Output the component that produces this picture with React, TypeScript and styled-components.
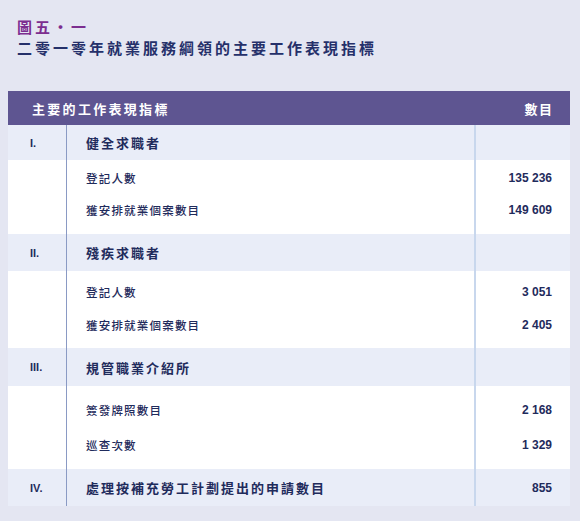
import React from "react";
import styled, { createGlobalStyle } from "styled-components";

const Global = createGlobalStyle`
  html, body { margin: 0; padding: 0; background: #e4e6f2; }
  body { font-family: "Noto Sans CJK TC", "Noto Sans", sans-serif; }
`;

const Page = styled.div`
  width: 580px;
  height: 521px;
  box-sizing: border-box;
  padding: 17px 10px 0 8px;
  background: #e4e6f2;
`;

const Titles = styled.div`
  padding-left: 9px;
  display: flex;
  flex-direction: column;
  gap: 0px;
  margin-bottom: 32px;
`;

const FigNo = styled.div`
  font-size: 15px;
  font-weight: 700;
  letter-spacing: 3px;
  color: #7c2e90;
  line-height: 20px;
`;

const Heading = styled.div`
  font-size: 15px;
  font-weight: 700;
  letter-spacing: 3px;
  color: #25306a;
  line-height: 22px;
`;

const Table = styled.div`
  display: flex;
  flex-direction: column;
  width: 562px;
`;

const HeaderRow = styled.div`
  height: 34px;
  background: #5e5591;
  color: #ffffff;
  display: flex;
  align-items: center;
  justify-content: space-between;
  padding: 0 18px 0 24px;
  font-size: 13px;
  font-weight: 700;
  letter-spacing: 2.3px;
`;

const HeaderNum = styled.span`
  letter-spacing: 1.5px;
  margin-right: -1.5px;
`;

const Grid = styled.div<{ $h: number; $tint?: boolean }>`
  display: grid;
  grid-template-columns: 59px 1fr 96px;
  height: ${(p) => p.$h}px;
  background: ${(p) => (p.$tint ? "#e9edf8" : "#ffffff")};
`;

const NumCell = styled.div`
  border-right: 1px solid #8a9ac4;
  display: flex;
  align-items: center;
  padding-left: 22px;
  font-family: "Liberation Sans", Arial, sans-serif;
  font-size: 11px;
  font-weight: 700;
  color: #1f2b5c;
`;

const SecTitle = styled.div`
  display: flex;
  align-items: center;
  padding-left: 19px;
  font-size: 13px;
  font-weight: 700;
  letter-spacing: 2px;
  color: #1f2b5c;
`;

const ValueCell = styled.div<{ $pt?: number; $pb?: number }>`
  border-left: 2px solid #c8d7ed;
  display: flex;
  flex-direction: column;
  align-items: flex-end;
  justify-content: center;
  padding: ${(p) => p.$pt ?? 0}px 18px ${(p) => p.$pb ?? 0}px 0;
  font-family: "Liberation Sans", Arial, sans-serif;
  font-size: 12px;
  font-weight: 700;
  color: #1f2b5c;
`;

const ItemCol = styled.div<{ $pt: number; $pb: number }>`
  display: flex;
  flex-direction: column;
  padding: ${(p) => p.$pt}px 0 ${(p) => p.$pb}px 19px;
`;

const ItemLabel = styled.div<{ $rh: number }>`
  height: ${(p) => p.$rh}px;
  display: flex;
  align-items: center;
  font-size: 11.5px;
  font-weight: 500;
  letter-spacing: 1.2px;
  color: #1f2b5c;
`;

const ItemValue = styled.div<{ $rh: number }>`
  height: ${(p) => p.$rh}px;
  display: flex;
  align-items: center;
`;

type Section = {
  no: string;
  title: string;
  h: number;
  value?: string;
  items: { label: string; value: string }[];
  bh: number;
  rh: number;
  pt: number;
  pb: number;
};

const sections: Section[] = [
  {
    no: "I.",
    title: "健全求職者",
    h: 35,
    items: [
      { label: "登記人數", value: "135 236" },
      { label: "獲安排就業個案數目", value: "149 609" },
    ],
    bh: 74,
    rh: 32,
    pt: 2,
    pb: 8,
  },
  {
    no: "II.",
    title: "殘疾求職者",
    h: 37,
    items: [
      { label: "登記人數", value: "3 051" },
      { label: "獲安排就業個案數目", value: "2 405" },
    ],
    bh: 77,
    rh: 33,
    pt: 4,
    pb: 7,
  },
  {
    no: "III.",
    title: "規管職業介紹所",
    h: 38,
    items: [
      { label: "簽發牌照數目", value: "2 168" },
      { label: "巡查次數", value: "1 329" },
    ],
    bh: 83,
    rh: 35,
    pt: 6,
    pb: 7,
  },
  {
    no: "IV.",
    title: "處理按補充勞工計劃提出的申請數目",
    h: 37,
    value: "855",
    items: [],
    bh: 0,
    rh: 0,
    pt: 0,
    pb: 0,
  },
];

export default function App() {
  return (
    <Page>
      <Global />
      <Titles>
        <FigNo>圖五・一</FigNo>
        <Heading>二零一零年就業服務綱領的主要工作表現指標</Heading>
      </Titles>
      <Table>
        <HeaderRow>
          <span>主要的工作表現指標</span>
          <HeaderNum>數目</HeaderNum>
        </HeaderRow>
        {sections.map((s) => (
          <React.Fragment key={s.no}>
            <Grid $h={s.h} $tint>
              <NumCell>{s.no}</NumCell>
              <SecTitle>{s.title}</SecTitle>
              <ValueCell>{s.value ?? ""}</ValueCell>
            </Grid>
            {s.items.length > 0 && (
              <Grid $h={s.bh}>
                <NumCell />
                <ItemCol $pt={s.pt} $pb={s.pb}>
                  {s.items.map((it) => (
                    <ItemLabel key={it.label} $rh={s.rh}>
                      {it.label}
                    </ItemLabel>
                  ))}
                </ItemCol>
                <ValueCell $pt={s.pt} $pb={s.pb}>
                  {s.items.map((it) => (
                    <ItemValue key={it.label} $rh={s.rh}>
                      {it.value}
                    </ItemValue>
                  ))}
                </ValueCell>
              </Grid>
            )}
          </React.Fragment>
        ))}
      </Table>
    </Page>
  );
}
